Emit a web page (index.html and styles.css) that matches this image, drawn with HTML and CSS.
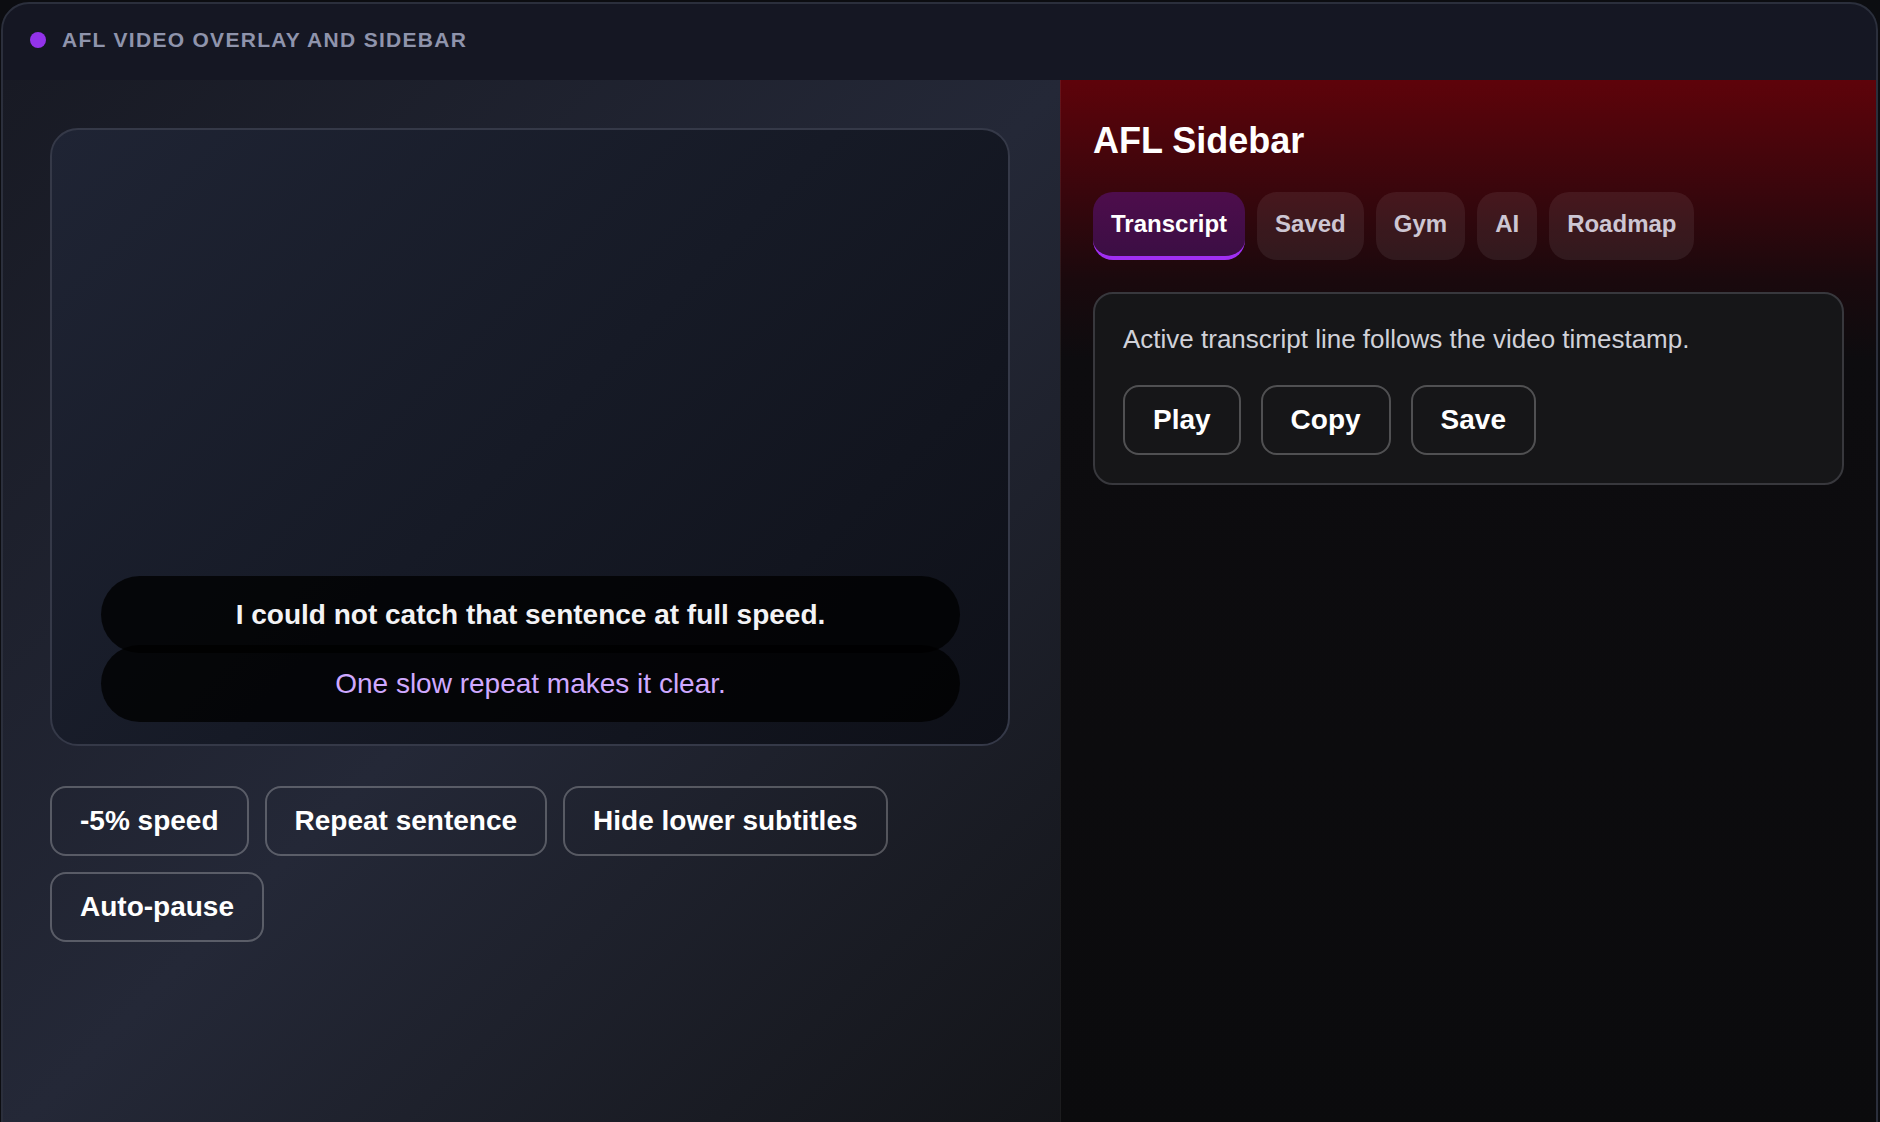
FILE: index.html
```html
<!DOCTYPE html>
<html lang="en">
<head>
    <meta charset="UTF-8">
    <meta name="viewport" content="width=device-width, initial-scale=1.0">
    <title>AFL Video Overlay and Sidebar</title>
    <link rel="stylesheet" href="styles.css">
</head>
<body>
    <div class="app">
        <header class="app-header">
            <span class="dot"></span>
            <span class="app-title">AFL video overlay and sidebar</span>
        </header>

        <div class="app-body">
            <!-- Player + controls -->
            <main class="player-panel">
                <div class="video">
                    <div class="subtitles">
                        <div class="sub-line sub-main">I could not catch that sentence at full speed.</div>
                        <div class="sub-line sub-second">One slow repeat makes it clear.</div>
                    </div>
                </div>

                <div class="controls">
                    <button class="btn">-5% speed</button>
                    <button class="btn">Repeat sentence</button>
                    <button class="btn">Hide lower subtitles</button>
                    <button class="btn">Auto-pause</button>
                </div>
            </main>

            <!-- Sidebar -->
            <aside class="sidebar">
                <h2>AFL Sidebar</h2>

                <nav class="tabs">
                    <button class="tab active">Transcript</button>
                    <button class="tab">Saved</button>
                    <button class="tab">Gym</button>
                    <button class="tab">AI</button>
                    <button class="tab">Roadmap</button>
                </nav>

                <div class="card">
                    <p>Active transcript line follows the video timestamp.</p>
                    <div class="card-actions">
                        <button class="btn">Play</button>
                        <button class="btn">Copy</button>
                        <button class="btn">Save</button>
                    </div>
                </div>
            </aside>
        </div>
    </div>
</body>
</html>
```

FILE: styles.css
```css
* {
    margin: 0;
    padding: 0;
    box-sizing: border-box;
}

body {
    font-family: "Liberation Sans", Arial, sans-serif;
    background-color: #0c0d11;
    color: #fff;
    height: 100vh;
    overflow: hidden;
}

.app {
    margin: 2px 2px 0 1px;
    height: 1150px;
    border: 2px solid #2b2f3c;
    border-radius: 28px;
    background-color: #151723;
    overflow: hidden;
    display: flex;
    flex-direction: column;
}

.app-header {
    height: 76px;
    flex-shrink: 0;
    display: flex;
    align-items: center;
    gap: 16px;
    padding-left: 27px;
    padding-bottom: 4px;
}

.dot {
    width: 16px;
    height: 16px;
    border-radius: 50%;
    background-color: #9333ea;
}

.app-title {
    font-size: 21px;
    font-weight: bold;
    letter-spacing: 1.3px;
    text-transform: uppercase;
    color: #8f94ac;
}

.app-body {
    flex: 1;
    display: grid;
    grid-template-columns: 1057px 1fr;
}

/* Left side: video and controls */
.player-panel {
    padding: 48px 50px 48px 47px;
    background: linear-gradient(135deg, #181a24 0%, #242837 50%, #131418 100%);
}

.video {
    position: relative;
    height: 618px;
    border: 2px solid #353948;
    border-radius: 28px;
    background: linear-gradient(135deg, #1f2434 0%, #161a26 50%, #0e1018 100%);
}

.subtitles {
    position: absolute;
    left: 49px;
    right: 48px;
    bottom: 22px;
    display: flex;
    flex-direction: column;
}

.sub-line {
    height: 77px;
    border-radius: 40px;
    background-color: rgba(0, 0, 0, 0.78);
    display: flex;
    align-items: center;
    justify-content: center;
    font-size: 28px;
}

.sub-main {
    font-weight: bold;
    color: #f3f3f5;
}

.sub-second {
    margin-top: -8px;
    color: #cfa9ff;
}

.controls {
    margin-top: 40px;
    display: flex;
    flex-wrap: wrap;
    gap: 16px;
}

.btn {
    font-family: inherit;
    font-size: 28px;
    font-weight: bold;
    color: #fff;
    background: transparent;
    border: 2px solid rgba(255, 255, 255, 0.25);
    border-radius: 16px;
    padding: 17px 28px;
    line-height: 1.15;
    cursor: pointer;
}

/* Right side: sidebar */
.sidebar {
    padding: 40px 32px 37px;
    border-left: 1px solid rgba(255, 255, 255, 0.07);
    background: linear-gradient(180deg, #5e030a 0px, #3a060c 110px, #1a090d 200px, #0d0c0f 280px, #0b0b0d 100%);
}

.sidebar h2 {
    font-size: 36px;
    font-weight: bold;
    margin-bottom: 30px;
}

.tabs {
    display: flex;
    gap: 12px;
    margin-bottom: 32px;
}

.tab {
    font-family: inherit;
    font-size: 24px;
    font-weight: bold;
    line-height: 1.15;
    color: #cdc6d3;
    background-color: rgba(255, 255, 255, 0.07);
    border: none;
    border-bottom: 4px solid transparent;
    border-radius: 20px;
    padding: 18px 18px 18px;
    cursor: pointer;
}

.tab.active {
    color: #fff;
    background: linear-gradient(180deg, #4e0d4c, #3b0e44);
    border-bottom-color: #a02ff2;
}

.card {
    border: 2px solid #38383d;
    border-radius: 20px;
    background-color: #161618;
    padding: 30px 28px 28px;
}

.card p {
    font-size: 26px;
    color: #d0d1d8;
    margin-bottom: 30px;
}

.card-actions {
    display: flex;
    gap: 20px;
}
```
